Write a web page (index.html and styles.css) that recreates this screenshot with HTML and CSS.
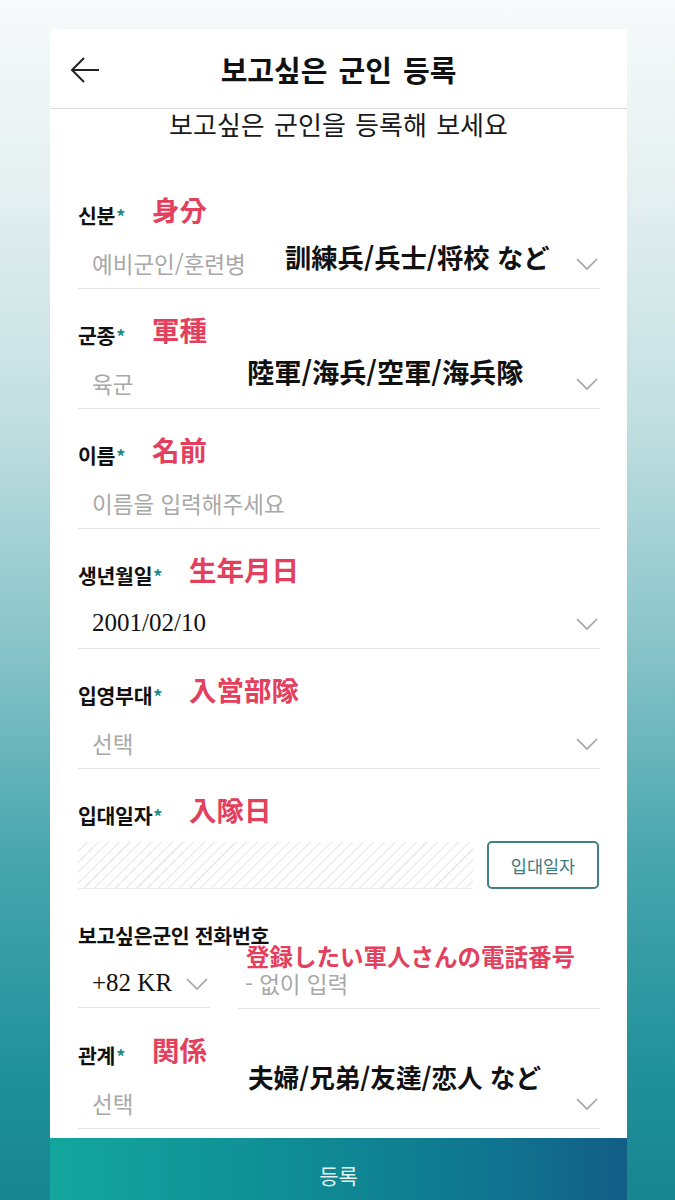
FILE: index.html
```html
<!DOCTYPE html>
<html lang="ko">
<head>
<meta charset="utf-8">
<title>보고싶은 군인 등록</title>
<link rel="stylesheet" href="styles.css">
</head>
<body>
<div class="card">
  <header class="topbar">
    <svg class="back" width="32" height="30" viewBox="0 0 32 30"><path d="M30 15H3M15 3L3 15l12 12" fill="none" stroke="#222" stroke-width="2"/></svg>
    <h1 class="title">보고싶은 군인 등록</h1>
  </header>
  <p class="subtitle">보고싶은 군인을 등록해 보세요</p>

  <form class="form">
    <div class="field">
      <div class="label-row"><span class="label">신분<span class="req">*</span></span><span class="note-red">身分</span></div>
      <div class="input-row"><span class="ph">예비군인/훈련병</span><svg class="chev" width="22" height="12" viewBox="0 0 22 12"><path d="M1 1l10 10L21 1" fill="none" stroke="#a0a0a0" stroke-width="1.6"/></svg></div>
      <span class="note-black n1">訓練兵/兵士/将校 など</span>
    </div>

    <div class="field">
      <div class="label-row"><span class="label">군종<span class="req">*</span></span><span class="note-red">軍種</span></div>
      <div class="input-row"><span class="ph">육군</span><svg class="chev" width="22" height="12" viewBox="0 0 22 12"><path d="M1 1l10 10L21 1" fill="none" stroke="#a0a0a0" stroke-width="1.6"/></svg></div>
      <span class="note-black n2">陸軍/海兵/空軍/海兵隊</span>
    </div>

    <div class="field">
      <div class="label-row"><span class="label">이름<span class="req">*</span></span><span class="note-red">名前</span></div>
      <div class="input-row"><span class="ph">이름을 입력해주세요</span></div>
    </div>

    <div class="field">
      <div class="label-row"><span class="label">생년월일<span class="req">*</span></span><span class="note-red">生年月日</span></div>
      <div class="input-row"><span class="val">2001/02/10</span><svg class="chev" width="22" height="12" viewBox="0 0 22 12"><path d="M1 1l10 10L21 1" fill="none" stroke="#a0a0a0" stroke-width="1.6"/></svg></div>
    </div>

    <div class="field">
      <div class="label-row"><span class="label">입영부대<span class="req">*</span></span><span class="note-red">入営部隊</span></div>
      <div class="input-row"><span class="ph">선택</span><svg class="chev" width="22" height="12" viewBox="0 0 22 12"><path d="M1 1l10 10L21 1" fill="none" stroke="#a0a0a0" stroke-width="1.6"/></svg></div>
    </div>

    <div class="field">
      <div class="label-row"><span class="label">입대일자<span class="req">*</span></span><span class="note-red">入隊日</span></div>
      <div class="date-row"><div class="hatch"></div><button type="button" class="date-btn">입대일자</button></div>
    </div>

    <div class="field">
      <div class="label-row"><span class="label">보고싶은군인 전화번호</span></div>
      <div class="phone-row">
        <div class="input-row country"><span class="val">+82 KR</span><svg class="chev" width="22" height="12" viewBox="0 0 22 12"><path d="M1 1l10 10L21 1" fill="none" stroke="#a0a0a0" stroke-width="1.6"/></svg></div>
        <div class="input-row phone"><span class="ph">- 없이 입력</span></div>
      </div>
      <span class="note-red-small">登録したい軍人さんの電話番号</span>
    </div>

    <div class="field">
      <div class="label-row"><span class="label">관계<span class="req">*</span></span><span class="note-red">関係</span></div>
      <div class="input-row"><span class="ph">선택</span><svg class="chev" width="22" height="12" viewBox="0 0 22 12"><path d="M1 1l10 10L21 1" fill="none" stroke="#a0a0a0" stroke-width="1.6"/></svg></div>
      <span class="note-black n3">夫婦/兄弟/友達/恋人 など</span>
    </div>
  </form>
</div>
<button type="button" class="submit">등록</button>
</body>
</html>
```

FILE: styles.css
```css
html, body {
  margin: 0;
  padding: 0;
  height: 1200px;
  overflow: hidden;
}
body {
  background: linear-gradient(to bottom, #f7fafa 0%, #e6f0f1 15%, #c2dfe1 35%, #84c2c7 55%, #46a5ad 72%, #1f9099 90%, #17858f 100%);
  font-family: "Noto Sans CJK KR", "Noto Sans", sans-serif;
  color: #111;
}
.card {
  margin: 29px 48px 0 50px;
  background: #fff;
  padding-bottom: 9px;
}
.topbar {
  height: 79px;
  border-bottom: 1px solid #dcdcdc;
  display: flex;
  align-items: center;
  justify-content: center;
  position: relative;
}
.back {
  position: absolute;
  left: 19px;
  top: 26px;
}
.title {
  margin: 0;
  font-size: 29px;
  font-weight: 700;
  word-spacing: 3px;
  color: #111;
}
.subtitle {
  margin: 0;
  height: 30px;
  line-height: 30px;
  text-align: center;
  font-size: 26px;
  word-spacing: 2px;
  color: #1a1a1a;
}
.form {
  margin: 60px 27px 0 28px;
  display: flex;
  flex-direction: column;
  gap: 30px;
}
.field {
  position: relative;
  display: flex;
  flex-direction: column;
  gap: 7px;
}
.label-row {
  height: 32px;
  display: flex;
  align-items: center;
}
.label {
  font-size: 20.5px;
  font-weight: 700;
  color: #111;
  line-height: 1;
  letter-spacing: -0.3px;
}
.req {
  color: #1a8d8d;
  font-size: 18px;
  margin-left: 1px;
}
.note-red {
  margin: 0 0 10px 27px;
  font-family: "Noto Sans CJK JP", sans-serif;
  font-size: 27.5px;
  font-weight: 700;
  color: #e2405c;
  line-height: 1;
}
.input-row {
  height: 50px;
  border-bottom: 1px solid #e3e3e3;
  display: flex;
  align-items: center;
  justify-content: space-between;
  padding: 0 2px 0 14px;
}
.ph {
  font-size: 22.5px;
  line-height: 1.2;
  color: #a8a8a8;
}
.val {
  font-family: "Liberation Serif", serif;
  font-size: 25px;
  line-height: 1.2;
  color: #111;
}
.chev {
  display: block;
  margin-top: 2px;
}
.date-row {
  height: 51px;
  display: flex;
  align-items: flex-end;
  justify-content: space-between;
}
.hatch {
  width: 395px;
  height: 46px;
  border-bottom: 1px solid #ececec;
  background: repeating-linear-gradient(135deg, #ffffff 0 6px, #ededed 6px 7.5px);
}
.date-btn {
  width: 112px;
  height: 48px;
  margin: 0 1px 0 0;
  border: 2px solid #3f8086;
  border-radius: 5px;
  background: #fff;
  color: #3a7a80;
  font-family: "Noto Sans CJK KR", sans-serif;
  font-size: 17.5px;
  padding: 0;
}
.phone-row {
  display: flex;
  gap: 28px;
}
.country {
  width: 132px;
  box-sizing: border-box;
  padding-right: 2px;
}
.phone {
  flex: 1;
  padding-left: 7px;
}
.note-black {
  position: absolute;
  font-family: "Noto Sans CJK JP", sans-serif;
  font-weight: 700;
  color: #111;
  line-height: 31px;
  white-space: nowrap;
}
.n1 { left: 207px; top: 42px; font-size: 26.3px; }
.n2 { left: 169px; top: 37px; font-size: 27.2px; }
.n3 { left: 170px; top: 22px; font-size: 25.6px; }
.note-red-small {
  position: absolute;
  left: 168px;
  top: 25px;
  font-family: "Noto Sans CJK JP", sans-serif;
  font-size: 23.5px;
  font-weight: 700;
  color: #e2405c;
  line-height: 24px;
  white-space: nowrap;
}
.submit {
  display: block;
  width: 577px;
  height: 74px;
  margin: 0 0 0 50px;
  border: 0;
  padding: 0;
  background: linear-gradient(to right, #13a69d 0%, #0f8b94 45%, #0f7690 75%, #135e86 100%);
  color: #e4f2f2;
  font-family: "Noto Sans CJK KR", sans-serif;
  font-size: 21px;
}
```
